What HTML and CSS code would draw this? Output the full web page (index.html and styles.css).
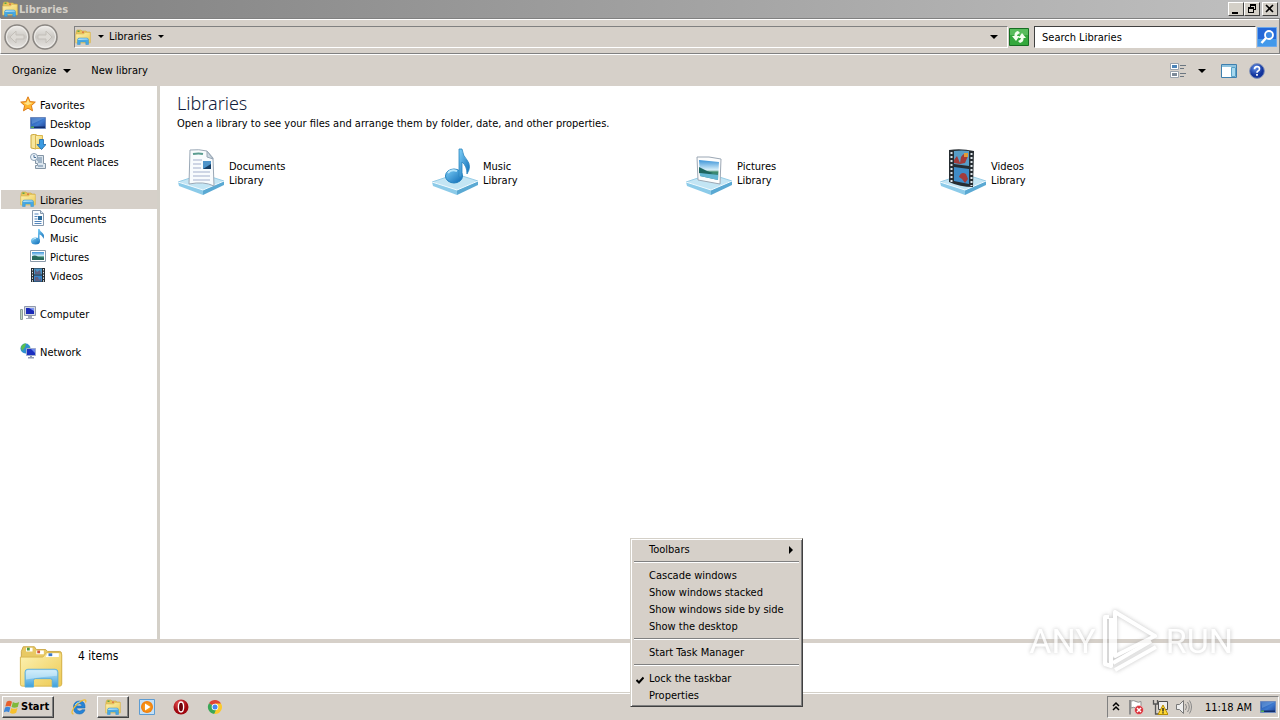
FILE: index.html
```html
<!DOCTYPE html>
<html lang="en">
<head>
<meta charset="utf-8">
<title>Libraries</title>
<link rel="stylesheet" href="styles.css">
</head>
<body>
<svg class="sprite" aria-hidden="true">
  <defs>
    <linearGradient id="gYellow" x1="0" y1="0" x2="1" y2="1"><stop offset="0" stop-color="#fdf3b4"/><stop offset="1" stop-color="#edc952"/></linearGradient>
    <linearGradient id="gBlue" x1="0" y1="0" x2="0" y2="1"><stop offset="0" stop-color="#c4e8fa"/><stop offset="1" stop-color="#3c9fdb"/></linearGradient>
    <linearGradient id="gNote" x1="0" y1="0" x2="1" y2="1"><stop offset="0" stop-color="#7fd0f8"/><stop offset="1" stop-color="#0a68b4"/></linearGradient>
    <linearGradient id="gScreen" x1="0" y1="0" x2="1" y2="1"><stop offset="0" stop-color="#1b49a0"/><stop offset=".55" stop-color="#3f7bd0"/><stop offset="1" stop-color="#1c3f94"/></linearGradient>
    <linearGradient id="gSky" x1="0" y1="0" x2="0" y2="1"><stop offset="0" stop-color="#3c94d8"/><stop offset=".5" stop-color="#d8f0fa"/><stop offset=".6" stop-color="#3d8a68"/><stop offset="1" stop-color="#2b7fa8"/></linearGradient>
    <linearGradient id="gRound" x1="0" y1="0" x2="0" y2="1"><stop offset="0" stop-color="#f0eeeb"/><stop offset=".5" stop-color="#cbc8c3"/><stop offset="1" stop-color="#e8e6e3"/></linearGradient>
    <radialGradient id="gOrange"><stop offset="0" stop-color="#ffb52e"/><stop offset="1" stop-color="#f07a08"/></radialGradient>
    <radialGradient id="gRed" cx=".4" cy=".3"><stop offset="0" stop-color="#ee5a5a"/><stop offset="1" stop-color="#a0060e"/></radialGradient>
    <radialGradient id="gHelp" cx=".4" cy=".3"><stop offset="0" stop-color="#5f8fe8"/><stop offset="1" stop-color="#12339c"/></radialGradient>
  </defs>
  <symbol id="i-folder" viewBox="0 0 48 48">
    <path d="M3 9 5 4h12l2 3h10l2 2h13q2 0 2 3v32H3z" fill="#e8c964" stroke="#c9a544"/>
    <path d="M8 5h7v4H8zM19 8h8v4h-8z" fill="#fff"/><path d="M9 5h3v3H9z" fill="#4c9a3c"/><path d="M20 8h3v3h-3z" fill="#d5543a"/>
    <path d="M2 15h24l4-5h14q2 0 2 3v31q0 2-2 2H4q-2 0-2-2z" fill="url(#gYellow)" stroke="#d9b650"/>
    <path d="M31 11h12v4H29z" fill="#fff"/><path d="M32 11h4v3h-4z" fill="#3c78c8"/>
    <path d="M7 47V31q0-3 3-3h29q3 0 3 3v16h-6v-7q0-2-2-2H18q-2 0-2 2v7z" fill="url(#gBlue)" stroke="#5aaedc"/>
    <path d="M8 32q0-3 3-3h27q3 0 3 3v3q-17 1-33 4z" fill="#e2f5fd" opacity=".5"/>
  </symbol>
  <symbol id="i-folder-small" viewBox="0 0 16 16">
    <path d="M1 3 2 1h4l1 1h4l1 1h3v10H1z" fill="#e8c65a" stroke="#cfa93f" stroke-width=".6"/>
    <path d="M2.500 1.500h2v1.500h-2z" fill="#5da34a"/><path d="M7 2.500h2V4H7z" fill="#e07a4a"/>
    <path d="M.7 5h8l1-1.500h5.600V14H.7z" fill="url(#gYellow)" stroke="#d9b650" stroke-width=".6"/>
    <path d="M2.500 15.500V11q0-2 2-2h7q2 0 2 2v4.500h-2.700V13H5.200v2.500z" fill="#46a8e2" stroke="#3590cc" stroke-width=".5"/>
    <path d="M3 11q0-1.500 1.500-1.500h7q1.500 0 1.500 1z" fill="#b5e1f7"/>
  </symbol>
  <symbol id="i-star" viewBox="0 0 16 16"><path d="m8 .8 2.100 4.800 5.200.5-3.900 3.500 1.100 5.200L8 12.100l-4.500 2.700 1.100-5.200L.7 6.100l5.200-.5z" fill="#ffb62e" stroke="#dd7b18"/><path d="m8 3 1.400 3.500 3.300.4-5 2.300-3.900-2.300 2.800-.4z" fill="#ffe38a"/></symbol>
  <symbol id="i-desktop" viewBox="0 0 16 16"><path d="M.5 2.500h15v11H.5z" fill="url(#gScreen)" stroke="#6d89bd"/><path d="M1 3h14L2 9z" fill="#86b5ea" opacity=".45"/><path d="M1 11.500h14v1.500H1z" fill="#122d6a"/><path d="M1 11.500h3v1.500H1z" fill="#58b058"/></symbol>
  <symbol id="i-download" viewBox="0 0 16 16"><path d="M1 1l5-1v15l-5-1z" fill="#f7e69c" stroke="#cda83c"/><path d="M5.500 1.500h7v13h-7z" fill="url(#gYellow)" stroke="#d9b650"/><path d="M9.500 5.500h4v5H16l-4.500 5L7 10.500h2.500z" fill="#3b9be2" stroke="#1a66a8" stroke-width=".8"/></symbol>
  <symbol id="i-recent" viewBox="0 0 16 16"><path d="M5.500 2.500h8v8h2v5h-10v-3h2v-2h-2z" fill="#dce6ee" stroke="#8495a5"/><path d="M7 5h5M7 7h5M8 9h4M8 13h5" stroke="#6482a0"/><circle cx="4" cy="4" r="3.500" fill="#eef5fb" stroke="#8aa0b4"/><path d="M4 2v2.500h2" fill="none" stroke="#4a6f95"/></symbol>
  <symbol id="i-doc" viewBox="0 0 16 16"><path d="M2.500.5h8l3 3v12h-11z" fill="#fafdff" stroke="#8698ad"/><path d="M10.500.5v3h3" fill="#d5e3f0" stroke="#8698ad"/><path d="M4.500 4h4M4.500 6.500h3M4.500 9h3M4.500 11.500h7M4.500 13.500h7" stroke="#5485bb"/><path d="M8 6h4v4H8z" fill="#2a6a9c"/></symbol>
  <symbol id="i-note" viewBox="0 0 16 16"><ellipse cx="5.500" cy="12" rx="4.500" ry="3.500" fill="url(#gNote)"/><path d="M8 0h1.500q.5 2.500 3 4 2.500 2 .8 6-.2-3-3.800-4.500V12H8z" fill="url(#gNote)"/><path d="M2.500 11q1-1.800 3.500-1.500" fill="none" stroke="#bde8fb"/></symbol>
  <symbol id="i-pic" viewBox="0 0 16 16"><path d="M.5 2.500h15v11H.5z" fill="#fff" stroke="#8a9aaa"/><path d="M2 4h12v8H2z" fill="url(#gSky)"/><path d="M2 8.500q3-2 6 .5l6 1v2H2z" fill="#286a5c"/></symbol>
  <symbol id="i-film" viewBox="0 0 16 16"><path d="M1 1h14v14H1z" fill="#252b30"/><path d="M4 1.500h8v6H4z" fill="#4b93c4"/><path d="M4 8.500h8v6H4z" fill="#3a84c8"/><path d="m5 2 2 3 3-2 1 4H5zM5 10h3l1 3 2-2v3H5z" fill="#5f5f80"/><path d="M2.500 2v13M13.500 2v13" stroke="#dfe7ec" stroke-dasharray="1.500 1.300"/></symbol>
  <symbol id="i-computer" viewBox="0 0 16 16"><path d="M.5 4.500h2v10h-2z" fill="#bfd4c0" stroke="#8c9d98"/><path d="M4.500 1.500h11v9h-11z" fill="#d4d9e4" stroke="#8f98ac"/><path d="M6 3h8v6H6z" fill="#1929b8"/><path d="M9 3h5v3z" fill="#7d94f0"/><path d="M8 11h4v2h2v1H6v-1h2z" fill="#a2a9b8"/></symbol>
  <symbol id="i-network" viewBox="0 0 16 16"><circle cx="5.500" cy="5.500" r="5" fill="#2f8fd0"/><path d="M1 4q2-4 5-3.500L5 4 2 8zM6 6l4-2v5L7 9z" fill="#5cc04c"/><path d="M6.500 5.500h9v7h-9z" fill="#1b2fc0" stroke="#9fabcd"/><path d="m11 6 4 0v4z" fill="#6c87ec"/><path d="M10 13h2v1h2v1.500H8V14h2z" fill="#909bb4"/></symbol>
  <symbol id="i-base" viewBox="0 0 48 48"><path d="M1 34 25 26 47 33 26 43z" fill="#c3e5f4" stroke="#96cce6"/><path d="M1 34 26 42v5L2 38z" fill="#8ccbe9"/><path d="m47 33-21 9v5l21-10z" fill="#5aa9d3"/><path d="M1 34 26 42 47 33" fill="none" stroke="#f3fbff"/></symbol>
  <symbol id="l-doc" viewBox="0 0 48 48"><use href="#i-base"/><path d="M13 2q9-1 17 1l6 7 1 28q-10-5-25-2z" fill="#f8fbfd" stroke="#9aa8b6"/><path d="m30 3 6 8-6-2z" fill="#ccd7e1" stroke="#9aa8b6"/><path d="M16 6q6-1 10 0" stroke="#5a9c90" stroke-width="2" fill="none"/><path d="M16 12h9M16 16h8M16 20h8M16 24h17M16 28h17M16 32h17" stroke="#a3afcc"/><path d="M26 13h8v8h-8z" fill="#4d93c9"/><path d="m26 21 8-5v5z" fill="#173f66"/></symbol>
  <symbol id="l-music" viewBox="0 0 48 48"><use href="#i-base"/><ellipse cx="23" cy="28" rx="8.500" ry="7" fill="url(#gNote)" stroke="#2381bf"/><path d="M28 1h3q1 7 5 11 5 6 0 14 0-8-5-12v15h-3z" fill="url(#gNote)" stroke="#2c86bf" stroke-width=".8"/><path d="M17 25q3-4 9-2" fill="none" stroke="#b7e5fb" stroke-width="2"/></symbol>
  <symbol id="l-pic" viewBox="0 0 48 48"><use href="#i-base"/><path d="M12 9q12-1 24 2l-1 25-22-4z" fill="#fdfdfd" stroke="#9ba7b4"/><path d="m14 12 20 2-1 18-18-4z" fill="url(#gSky)"/><path d="m14 19 8 4 6 2-6 2-8-2z" fill="#1d655f"/><path d="m15 25 18 2v5l-18-4z" fill="#65b7d2"/></symbol>
  <symbol id="l-film" viewBox="0 0 48 48"><use href="#i-base"/><path d="M10 2q12-2 25 1l-1 36q-13 0-24-5z" fill="#262d32"/><path d="M15 3q8-1 15 0v15l-15-2z" fill="#589ec8"/><path d="m15 19 15 2v15l-15-3z" fill="#3f8cc8"/><path d="m15 12 3-4 3 7 1-6q4-6 7-1l-3 7-5 1-6-1zM20 29q2-6 7-3l2 5-3 4-3-4z" fill="#a33b3a"/><path d="M25 5h4v4h-4z" fill="#e29c38"/><path d="M12.500 4v31M32.500 5v33" stroke="#dfe7ec" stroke-width="2" stroke-dasharray="2 2"/></symbol>
</svg>

<main class="window">
  <header class="titlebar">
    <svg class="ic16"><use href="#i-folder-small"/></svg>
    <h1 class="title">Libraries</h1>
    <div class="captions">
      <button class="cap" aria-label="Minimize"><svg viewBox="0 0 14 12"><path d="M3 9h6v2H3z"/></svg></button>
      <button class="cap" aria-label="Restore"><svg viewBox="0 0 14 12"><path d="M5 1h6v6H9V6h1V3H6v1H5zM3 4h6v6H3zm1 2v3h4V6z" fill-rule="evenodd"/></svg></button>
      <button class="cap close" aria-label="Close"><svg viewBox="0 0 14 12"><path d="m3 2 7 7M10 2 3 9" stroke="#000" stroke-width="1.600"/></svg></button>
    </div>
  </header>

  <div class="navbar">
    <div class="history">
      <button class="round" aria-label="Back"><svg viewBox="0 0 26 26"><circle cx="13" cy="13" r="12" fill="url(#gRound)" stroke="#8a8682" stroke-width="1.500"/><circle cx="13" cy="13" r="10.500" fill="none" stroke="#f0eeeb"/><path d="m12 7-6 6 6 6v-4h8v-4h-8z" fill="#dddad5" stroke="#c3bfb9"/></svg></button>
      <button class="round" aria-label="Forward"><svg viewBox="0 0 26 26"><circle cx="13" cy="13" r="12" fill="url(#gRound)" stroke="#8a8682" stroke-width="1.500"/><circle cx="13" cy="13" r="10.500" fill="none" stroke="#f0eeeb"/><path d="m14 7 6 6-6 6v-4H6v-4h8z" fill="#dddad5" stroke="#c3bfb9"/></svg></button>
    </div>
    <div class="address">
      <svg class="ic16"><use href="#i-folder-small"/></svg>
      <button class="plain arrow-btn" aria-label="Locations"><span class="arrow small"></span></button>
      <button class="plain crumb">Libraries <span class="arrow small"></span></button>
      <button class="plain drop" aria-label="Previous locations"><span class="arrow"></span></button>
    </div>
    <button class="plain refresh" aria-label="Refresh"><svg viewBox="0 0 20 18"><path d="M.5.5h19v17H.5z" fill="#35a83d" stroke="#176e23"/><path d="M1 1h18v6H1z" fill="#7bd07b" opacity=".5"/><path d="M9 3Q5 4 5.500 8H3l4 5 3.500-5H8q0-2 3-3zM11 15q4-1 3.500-5H17l-4-5-3.500 5H12q0 2-3 3z" fill="#f4fff0"/></svg></button>
    <input class="search" type="text" aria-label="Search Libraries" value="Search Libraries">
    <button class="plain go" aria-label="Search"><svg viewBox="0 0 20 20"><path d="M.5.5h19v19H.5z" fill="#2368d8" stroke="#6ca8ec"/><path d="M1 12h18v7H1z" fill="#55b4f4" opacity=".65"/><circle cx="12" cy="8" r="4" fill="#3c8ae4" stroke="#fff" stroke-width="1.800"/><path d="m9 11-4.500 5" stroke="#fff" stroke-width="2.500"/></svg></button>
  </div>

  <div class="commands">
    <button class="plain organize">Organize <span class="arrow"></span></button>
    <button class="plain">New library</button>
    <div class="view-tools">
      <button class="plain" aria-label="Change your view"><svg class="ic16" viewBox="0 0 16 16"><path d="M.5.500h8v6h-8zM.5 8.500h8v6h-8z" fill="#fff" stroke="#9aa3ad"/><path d="M2 2h5v3H2z" fill="#4c84b8"/><path d="M2 10h5v3H2z" fill="#7e8b99"/><path d="M10 2.500h6M10 5.500h4M10 10.500h6M10 13.500h4" stroke="#6b7681"/></svg></button>
      <button class="plain view-drop" aria-label="More options"><span class="arrow"></span></button>
      <button class="plain" aria-label="Show the preview pane"><svg class="ic16" viewBox="0 0 16 16"><path d="M.5 1.500h15v13H.5z" fill="#fff" stroke="#3e7fae"/><path d="M1 2h14v2H1z" fill="#8ec3df"/><path d="M10.500 4.500h4v9h-4z" fill="#a7d8ef" stroke="#5aa2c6"/></svg></button>
      <button class="plain help" aria-label="Help"><svg class="ic16" viewBox="0 0 16 16"><circle cx="8" cy="8" r="7.400" fill="url(#gHelp)" stroke="#8494ba"/><path d="M5.500 6.200q0-2.500 2.500-2.500t2.500 2.200q0 1.300-1.500 2.100-1 .5-1 1.800" fill="none" stroke="#fff" stroke-width="1.700"/><path d="M7.100 11h1.800v1.700H7.100z" fill="#fff"/></svg></button>
    </div>
  </div>

  <div class="content">
    <nav class="tree" aria-label="Navigation">
      <ul>
        <li><a href="#"><svg class="ic16"><use href="#i-star"/></svg>Favorites</a>
          <ul>
            <li><a href="#"><svg class="ic16"><use href="#i-desktop"/></svg>Desktop</a></li>
            <li><a href="#"><svg class="ic16"><use href="#i-download"/></svg>Downloads</a></li>
            <li><a href="#"><svg class="ic16"><use href="#i-recent"/></svg>Recent Places</a></li>
          </ul></li>
        <li><a href="#" class="selected"><svg class="ic16"><use href="#i-folder-small"/></svg>Libraries</a>
          <ul>
            <li><a href="#"><svg class="ic16"><use href="#i-doc"/></svg>Documents</a></li>
            <li><a href="#"><svg class="ic16"><use href="#i-note"/></svg>Music</a></li>
            <li><a href="#"><svg class="ic16"><use href="#i-pic"/></svg>Pictures</a></li>
            <li><a href="#"><svg class="ic16"><use href="#i-film"/></svg>Videos</a></li>
          </ul></li>
        <li><a href="#"><svg class="ic16"><use href="#i-computer"/></svg>Computer</a></li>
        <li><a href="#"><svg class="ic16"><use href="#i-network"/></svg>Network</a></li>
      </ul>
    </nav>
    <section class="pane">
      <h2>Libraries</h2>
      <p>Open a library to see your files and arrange them by folder, date, and other properties.</p>
      <div class="items">
        <a href="#" class="item"><svg><use href="#l-doc"/></svg><span>Documents<br>Library</span></a>
        <a href="#" class="item"><svg><use href="#l-music"/></svg><span>Music<br>Library</span></a>
        <a href="#" class="item"><svg><use href="#l-pic"/></svg><span>Pictures<br>Library</span></a>
        <a href="#" class="item"><svg><use href="#l-film"/></svg><span>Videos<br>Library</span></a>
      </div>
    </section>
  </div>

  <section class="details">
    <svg class="big"><use href="#i-folder"/></svg>
    <span>4 items</span>
  </section>

  <div class="watermark">
    <span>ANY</span>
    <svg viewBox="0 0 62 66"><g fill="none" stroke="#fff" stroke-width="4" stroke-linejoin="round"><path d="M15 4v44l40-20z"/><path d="M9 9H5v47l6 2V10M13 55l38-22M15 62l41-23"/></g></svg>
    <span>RUN</span>
  </div>
</main>

<footer class="taskbar">
  <button class="start"><svg viewBox="0 0 18 16"><path d="M3 2q3-2 6 0L7.500 7.500Q5 6 1.500 7.500z" fill="#e8602c"/><path d="M10 2.500q3 2 7 0L15.500 8q-4 1.500-7 0z" fill="#7fb93c"/><path d="M1.200 8.500q3-1.500 6 0L5.700 14q-3-2-6 0z" fill="#3f87d8"/><path d="M8.200 9q3 2 7 0l-1.500 5.500q-4 2-7 0z" fill="#f7c02c"/></svg>Start</button>
  <div class="launch">
    <button class="task" aria-label="Internet Explorer"><svg class="ic16" viewBox="0 0 16 16"><path d="M14 9H5.500q.5 3 3 3 1.800 0 2.500-1.200h3Q12.500 15 8.500 15 2.500 15 2.500 8.500T8.500 2Q14.500 2 14 9zm-3-2q-.3-2.300-2.500-2.300T5.600 7z" fill="#2584d8" stroke="#1668b4" stroke-width=".6" fill-rule="evenodd"/><path d="M2.500 15q-3-.5 0-5.500Q6 4 11 1.500q5-2 3.500 2" fill="none" stroke="#f0bd35" stroke-width="1.300"/><path d="M4 6q2-3 5-3" fill="none" stroke="#8ad0f8"/></svg></button>
    <button class="task active" aria-label="Libraries"><svg class="ic16"><use href="#i-folder-small"/></svg></button>
    <button class="task" aria-label="Media Player"><svg class="ic16" viewBox="0 0 16 16"><path d="M.5.5h15v15H.5z" fill="#c4e0f6" stroke="#5d9cd2"/><circle cx="8" cy="8" r="6" fill="url(#gOrange)"/><path d="m6 4.500 5.500 3.500L6 11.500z" fill="#fff"/></svg></button>
    <button class="task" aria-label="Opera"><svg class="ic16" viewBox="0 0 16 16"><circle cx="8" cy="8" r="7.500" fill="url(#gRed)"/><ellipse cx="8" cy="8" rx="2.600" ry="5" fill="#6b030b" stroke="#fff" stroke-width="1.300"/></svg></button>
    <button class="task" aria-label="Chrome"><svg class="ic16" viewBox="0 0 16 16"><path d="M8 8 2 4.200a7 7 0 0 1 12 .3z" fill="#e04334"/><path d="M8 8 2 4.200A7 7 0 0 0 7.300 15L11 9.500z" fill="#3aa757"/><path d="M8 8h2l-2.700 7A7 7 0 0 0 14 4.500H8z" fill="#fbc92d"/><circle cx="8" cy="8" r="3.300" fill="#fff"/><circle cx="8" cy="8" r="2.500" fill="#4688f0"/></svg></button>
  </div>
  <div class="tray">
    <button class="plain" aria-label="Show hidden icons"><svg class="chev" viewBox="0 0 8 12"><path d="m1 5 3-3 3 3M1 9l3-3 3 3" fill="none" stroke="#000" stroke-width="1.500"/></svg></button>
    <button class="plain" aria-label="Action Center"><svg class="ic16" viewBox="0 0 16 16"><path d="M2 1v14.500" stroke="#77787a" stroke-width="1.500"/><path d="M3 2q3-1 5 .5t5 0v7q-3 1-5-.5T3 9z" fill="#fff" stroke="#8f8f8f"/><circle cx="11" cy="11" r="4.500" fill="#d8323a" stroke="#f5d5d5" stroke-width=".6"/><path d="m9 9 4 4M13 9l-4 4" stroke="#fff" stroke-width="1.500"/></svg></button>
    <button class="plain" aria-label="Network status"><svg class="ic16" viewBox="0 0 16 16"><path d="M6.500 2.500h9v8h-9z" fill="#eee" stroke="#4e4e4e"/><path d="M1.500 1v4h4V1M3.500 5v10h6" fill="none" stroke="#555" stroke-width="1.300"/><path d="m11 6 5 9.500H6z" fill="#ffd832" stroke="#b78c00"/><path d="M11 9v3.500M11 13.300v1.200" stroke="#222" stroke-width="1.400"/></svg></button>
    <button class="plain" aria-label="Volume"><svg class="ic16" viewBox="0 0 16 16"><path d="M.5 5.500h3l4-4v13l-4-4h-3z" fill="#eee" stroke="#777"/><path d="M9.500 5q2 3 0 6M11.500 3q3.500 5 0 10M13.500 1.500q4 6.500 0 13" fill="none" stroke="#888"/></svg></button>
    <time class="clock">11:18 AM</time>
    <button class="plain" aria-label="Show desktop"><svg class="ic16"><use href="#i-desktop"/></svg></button>
  </div>
</footer>

<div class="menu" role="menu">
  <button role="menuitem">Toolbars<span class="submenu"></span></button>
  <hr>
  <button role="menuitem">Cascade windows</button>
  <button role="menuitem">Show windows stacked</button>
  <button role="menuitem">Show windows side by side</button>
  <button role="menuitem">Show the desktop</button>
  <hr>
  <button role="menuitem">Start Task Manager</button>
  <hr>
  <button role="menuitemcheckbox" aria-checked="true"><svg class="check" viewBox="0 0 8 8"><path d="m.5 4 2.500 2.500 4.500-5" fill="none" stroke="#000" stroke-width="2"/></svg>Lock the taskbar</button>
  <button role="menuitem">Properties</button>
</div>
</body>
</html>
```

FILE: styles.css
```css
* { box-sizing: border-box; }
body {
  margin: 0;
  height: 100vh;
  display: flex;
  flex-direction: column;
  overflow: hidden;
  background: #fff;
  color: #000;
  font: 11px/14px Tahoma, "DejaVu Sans Condensed", "Noto Sans", sans-serif;
}
button, input { font: inherit; color: inherit; }
a { color: inherit; text-decoration: none; }
ul { list-style: none; margin: 0; padding: 0; }
svg { display: block; flex: none; }
.sprite { position: absolute; width: 0; height: 0; }
.ic16 { width: 16px; height: 16px; }
.plain { display: flex; align-items: center; border: 0; padding: 0; background: none; }
.arrow { border: 4px solid transparent; border-top-color: #000; border-bottom: 0; }
.arrow.small { border-width: 3px; border-bottom: 0; }

.window { flex: 1; min-height: 0; display: flex; flex-direction: column; position: relative; }

.titlebar {
  display: flex;
  align-items: center;
  height: 18px;
  padding: 0 2px;
  background: linear-gradient(90deg, #808080, #c0c0c0);
}
.title { flex: 1; margin: 0 0 0 1px; padding-top: 1px; color: #d4d0c8; font-size: 11px; font-weight: bold; }
.captions { display: flex; }
.cap {
  width: 16px;
  height: 14px;
  padding: 0;
  border: 1px solid;
  border-color: #fff #404040 #404040 #fff;
  background: #d4d0c8;
}
.cap.close { margin-left: 2px; }
.cap svg { width: 14px; height: 12px; }

.navbar {
  display: flex;
  align-items: center;
  height: 36px;
  padding: 1px 2px 0 3px;
  background: #d6d0c9;
  border: 1px solid;
  border-color: #808080 #808080 #808080 #fff;
  box-shadow: inset 0 1px #fff;
}
.history { display: flex; gap: 2px; margin-right: 16px; }
.round { width: 26px; height: 26px; border: 0; padding: 0; background: none; border-radius: 50%; }
.address {
  flex: 1;
  display: flex;
  align-items: center;
  height: 22px;
  border: 1px solid;
  border-color: #808080 #fff #fff #808080;
}
.arrow-btn { margin: 0 5px 0 7px; }
.crumb { gap: 6px; }
.drop { margin-left: auto; margin-right: 9px; }
.refresh { width: 20px; height: 18px; margin: 0 5px 0 1px; }
.refresh svg { width: 20px; height: 18px; }
.search {
  width: 222px;
  height: 22px;
  padding: 1px 7px 0;
  border: 1px solid;
  border-color: #404040 #fff #fff #404040;
  background: #fff;
  outline: 0;
}
.go { width: 20px; height: 20px; margin-left: 1px; }
.go svg { width: 20px; height: 20px; }

.commands {
  display: flex;
  align-items: center;
  height: 32px;
  padding: 0 15px 0 12px;
  background: #d6d0c9;
  border-top: 1px solid #fff;
}
.organize { gap: 7px; margin-right: 20px; }
.view-tools { display: flex; align-items: center; margin-left: auto; }
.view-drop { margin: 0 15px 0 12px; }
.help { margin-left: 12px; }

.content { flex: 1; min-height: 0; display: flex; }
.tree { width: 160px; padding: 9px 0 0 1px; border-right: 3px solid #d4d0c8; }
.tree > ul { display: grid; gap: 19px; }
.tree a { display: flex; align-items: center; gap: 4px; height: 19px; padding: 2px 0 0 19px; }
.tree .ic16 { margin-bottom: 3px; }
.tree ul ul a { padding-left: 29px; }
.tree .selected { background: #d6d0c9; }

.pane { flex: 1; min-width: 0; padding: 6px 17px; }
.pane h2 { margin: 0; color: #101c3c; font: 18px/23px "Noto Sans", "Open Sans", sans-serif; font-weight: 300; }
.pane p { margin: 2px 0 0; }
.items { display: flex; flex-wrap: wrap; margin-top: 17px; }
.item { display: flex; align-items: center; gap: 4px; width: 254px; height: 48px; }
.item span { padding-top: 3px; }
.item svg { width: 48px; height: 48px; }

.details { display: flex; height: 53px; padding-left: 17px; border-top: 4px solid #d6d0c9; }
.details .big { width: 48px; height: 45px; }
.details span { margin: 6px 0 0 13px; font-size: 12px; }

.watermark {
  position: absolute;
  right: 47px;
  bottom: 18px;
  display: flex;
  align-items: center;
  gap: 4px;
  color: #fff;
  font: 34px/66px "Roboto", sans-serif;
  opacity: .8;
  pointer-events: none;
  filter: drop-shadow(0 0 2px #b4b4b4);
}
.watermark svg { width: 62px; height: 66px; }

.taskbar {
  display: flex;
  align-items: center;
  height: 28px;
  padding: 1px 1px 0 2px;
  background: #d6d0c9;
  border-top: 1px solid #d4d0c8;
  box-shadow: inset 0 1px #fff;
}
.start {
  display: flex;
  align-items: center;
  gap: 1px;
  width: 52px;
  height: 22px;
  padding: 0 1px;
  border: 1px solid;
  border-color: #fff #404040 #404040 #fff;
  box-shadow: inset -1px -1px #808080;
  background: #d6d0c9;
  font-weight: bold;
}
.start svg { width: 16px; height: 16px; }
.launch { display: flex; gap: 2px; margin-left: 9px; }
.task {
  display: flex;
  align-items: center;
  justify-content: center;
  width: 32px;
  height: 22px;
  padding: 0;
  border: 1px solid transparent;
  background: none;
}
.task.active { border-color: #fff #404040 #404040 #fff; box-shadow: inset -1px -1px #808080; }
.tray {
  display: flex;
  align-items: center;
  gap: 8px;
  height: 22px;
  margin-left: auto;
  padding: 0 2px 0 4px;
  border: 1px solid;
  border-color: #808080 #fff #fff #808080;
}
.chev { width: 8px; height: 12px; }
.clock { margin-left: 5px; padding-top: 1px; }

.menu {
  position: absolute;
  left: 630px;
  bottom: 13px;
  width: 173px;
  padding: 2px;
  background: #d6d0c9;
  border: 1px solid;
  border-color: #d4d0c8 #404040 #404040 #d4d0c8;
  box-shadow: inset 1px 1px #fff, inset -1px -1px #808080;
  display: flex;
  flex-direction: column;
}
.menu button {
  position: relative;
  display: flex;
  align-items: center;
  height: 17px;
  padding: 0 7px 0 16px;
  border: 0;
  background: none;
  text-align: left;
}
.menu hr { width: 165px; height: 2px; margin: 3px 1px 4px; border: 0; border-top: 1px solid #808080; border-bottom: 1px solid #fff; }
.submenu { margin-left: auto; border: 4px solid transparent; border-left-color: #000; border-right: 0; }
.check { position: absolute; left: 3px; top: 6px; width: 8px; height: 8px; }
```
